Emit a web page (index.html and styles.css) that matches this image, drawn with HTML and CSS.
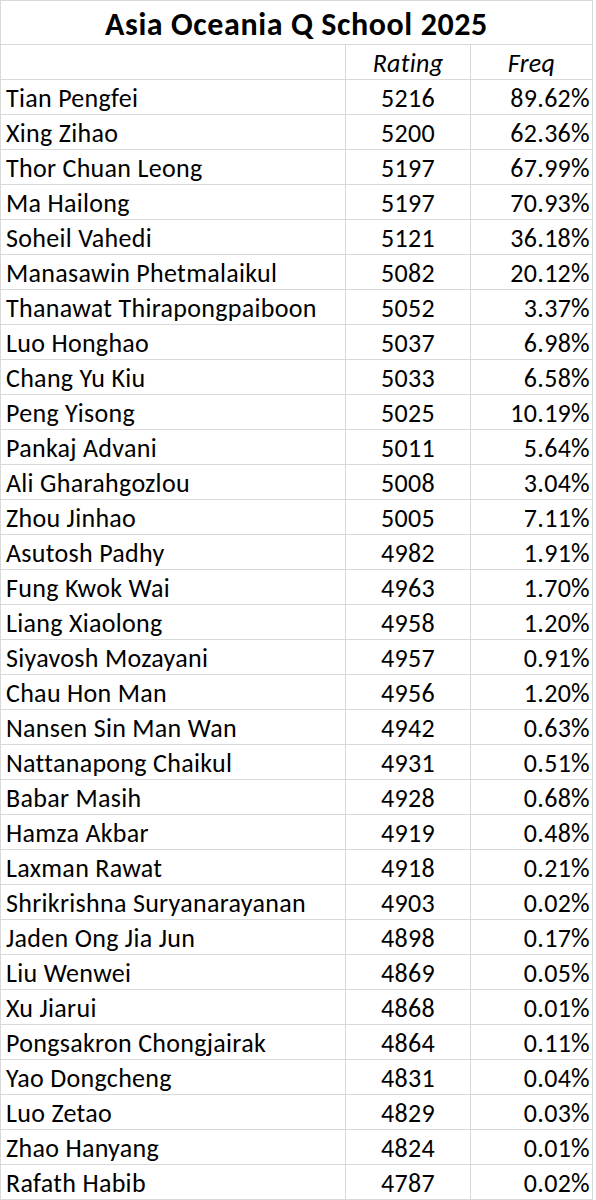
FILE: index.html
```html
<!DOCTYPE html>
<html>
<head>
<meta charset="utf-8">
<link rel="stylesheet" href="styles.css">
</head>
<body>
<div class="sheet">
  <div class="cell title">Asia Oceania Q School 2025</div>
  <div class="cell"></div><div class="cell head">Rating</div><div class="cell head">Freq</div>
  <div class="cell name">Tian Pengfei</div><div class="cell num">5216</div><div class="cell pct">89.62%</div>
  <div class="cell name">Xing Zihao</div><div class="cell num">5200</div><div class="cell pct">62.36%</div>
  <div class="cell name">Thor Chuan Leong</div><div class="cell num">5197</div><div class="cell pct">67.99%</div>
  <div class="cell name">Ma Hailong</div><div class="cell num">5197</div><div class="cell pct">70.93%</div>
  <div class="cell name">Soheil Vahedi</div><div class="cell num">5121</div><div class="cell pct">36.18%</div>
  <div class="cell name">Manasawin Phetmalaikul</div><div class="cell num">5082</div><div class="cell pct">20.12%</div>
  <div class="cell name">Thanawat Thirapongpaiboon</div><div class="cell num">5052</div><div class="cell pct">3.37%</div>
  <div class="cell name">Luo Honghao</div><div class="cell num">5037</div><div class="cell pct">6.98%</div>
  <div class="cell name">Chang Yu Kiu</div><div class="cell num">5033</div><div class="cell pct">6.58%</div>
  <div class="cell name">Peng Yisong</div><div class="cell num">5025</div><div class="cell pct">10.19%</div>
  <div class="cell name">Pankaj Advani</div><div class="cell num">5011</div><div class="cell pct">5.64%</div>
  <div class="cell name">Ali Gharahgozlou</div><div class="cell num">5008</div><div class="cell pct">3.04%</div>
  <div class="cell name">Zhou Jinhao</div><div class="cell num">5005</div><div class="cell pct">7.11%</div>
  <div class="cell name">Asutosh Padhy</div><div class="cell num">4982</div><div class="cell pct">1.91%</div>
  <div class="cell name">Fung Kwok Wai</div><div class="cell num">4963</div><div class="cell pct">1.70%</div>
  <div class="cell name">Liang Xiaolong</div><div class="cell num">4958</div><div class="cell pct">1.20%</div>
  <div class="cell name">Siyavosh Mozayani</div><div class="cell num">4957</div><div class="cell pct">0.91%</div>
  <div class="cell name">Chau Hon Man</div><div class="cell num">4956</div><div class="cell pct">1.20%</div>
  <div class="cell name">Nansen Sin Man Wan</div><div class="cell num">4942</div><div class="cell pct">0.63%</div>
  <div class="cell name">Nattanapong Chaikul</div><div class="cell num">4931</div><div class="cell pct">0.51%</div>
  <div class="cell name">Babar Masih</div><div class="cell num">4928</div><div class="cell pct">0.68%</div>
  <div class="cell name">Hamza Akbar</div><div class="cell num">4919</div><div class="cell pct">0.48%</div>
  <div class="cell name">Laxman Rawat</div><div class="cell num">4918</div><div class="cell pct">0.21%</div>
  <div class="cell name">Shrikrishna Suryanarayanan</div><div class="cell num">4903</div><div class="cell pct">0.02%</div>
  <div class="cell name">Jaden Ong Jia Jun</div><div class="cell num">4898</div><div class="cell pct">0.17%</div>
  <div class="cell name">Liu Wenwei</div><div class="cell num">4869</div><div class="cell pct">0.05%</div>
  <div class="cell name">Xu Jiarui</div><div class="cell num">4868</div><div class="cell pct">0.01%</div>
  <div class="cell name">Pongsakron Chongjairak</div><div class="cell num">4864</div><div class="cell pct">0.11%</div>
  <div class="cell name">Yao Dongcheng</div><div class="cell num">4831</div><div class="cell pct">0.04%</div>
  <div class="cell name">Luo Zetao</div><div class="cell num">4829</div><div class="cell pct">0.03%</div>
  <div class="cell name">Zhao Hanyang</div><div class="cell num">4824</div><div class="cell pct">0.01%</div>
  <div class="cell name">Rafath Habib</div><div class="cell num">4787</div><div class="cell pct">0.02%</div>
</div>
</body>
</html>
```
FILE: styles.css
```css
html, body {
  margin: 0;
  padding: 0;
  background: #ffffff;
}
.sheet {
  display: grid;
  grid-template-columns: 344px 124px 121px;
  grid-template-rows: 43px;
  grid-auto-rows: 34px;
  gap: 1px;
  padding: 1px;
  width: 591px;
  background: #d9d9d9;
  font-family: "Carlito", "Calibri", "Lato", sans-serif;
  font-size: 26px;
  letter-spacing: 0.3px;
  color: #000000;
}
.cell {
  background: #ffffff;
  display: flex;
  align-items: flex-end;
  line-height: 1;
  padding-bottom: 3px;
  box-sizing: border-box;
  white-space: nowrap;
  overflow: hidden;
}
.title {
  grid-column: 1 / 4;
  justify-content: center;
  font-weight: bold;
  font-size: 32px;
  letter-spacing: 0.6px;
  padding-bottom: 3px;
}
.head {
  justify-content: center;
  font-style: italic;
}
.name {
  padding-left: 5px;
}
.num {
  justify-content: center;
}
.pct {
  justify-content: flex-end;
  padding-right: 2px;
}
```
